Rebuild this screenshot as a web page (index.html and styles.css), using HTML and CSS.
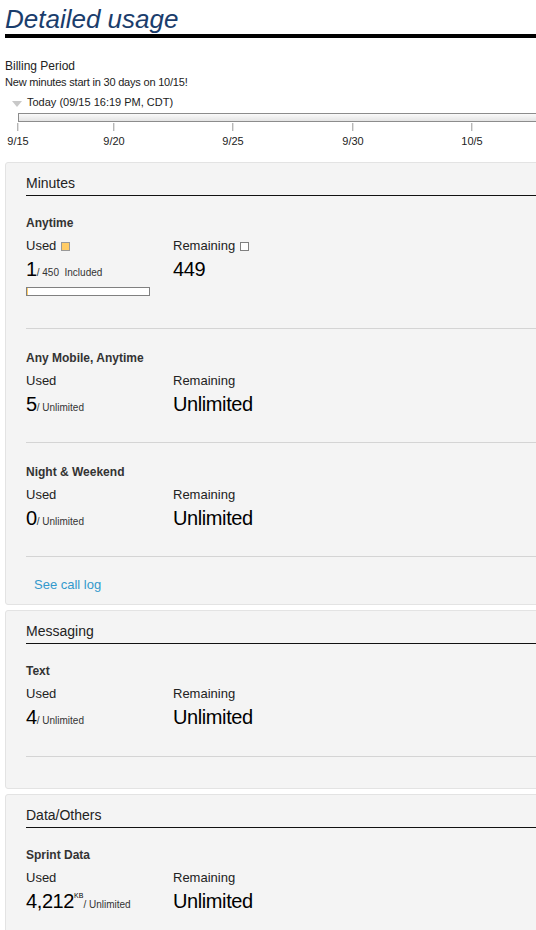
FILE: index.html
```html
<!DOCTYPE html>
<html>
<head>
    <title>Detailed usage</title>
    <link rel="stylesheet" href="styles.css">
</head>
<body>
    <div class="page">
        <h1 class="page-title">Detailed usage</h1>

        <div class="billing">
            <div class="billing-title">Billing Period</div>
            <div class="billing-note">New minutes start in 30 days on 10/15!</div>
            <div class="today"><span class="today-arrow"></span>Today (09/15 16:19 PM, CDT)</div>

            <!-- billing cycle timeline, ticks every 5 days -->
            <div class="timeline">
                <div class="timeline-bar"></div>
                <div class="axis">
                    <div class="tick" style="left: 0px">9/15</div>
                    <div class="tick" style="left: 96px">9/20</div>
                    <div class="tick" style="left: 215px">9/25</div>
                    <div class="tick" style="left: 335px">9/30</div>
                    <div class="tick" style="left: 454px">10/5</div>
                </div>
            </div>
        </div>

        <section class="panel">
            <h2 class="panel-title">Minutes</h2>

            <div class="usage">
                <h3 class="usage-name">Anytime</h3>
                <div class="usage-cols">
                    <div class="usage-col">
                        <div class="usage-label">Used <span class="swatch swatch-used"></span></div>
                        <div class="usage-value"><span class="big">1</span><span class="small">/ 450&nbsp; Included</span></div>
                        <div class="meter"><div class="meter-fill" style="width: 0.22%"></div></div>
                    </div>
                    <div class="usage-col">
                        <div class="usage-label">Remaining <span class="swatch"></span></div>
                        <div class="usage-value"><span class="big">449</span></div>
                    </div>
                </div>
            </div>

            <div class="usage">
                <h3 class="usage-name">Any Mobile, Anytime</h3>
                <div class="usage-cols">
                    <div class="usage-col">
                        <div class="usage-label">Used</div>
                        <div class="usage-value"><span class="big">5</span><span class="small">/ Unlimited</span></div>
                    </div>
                    <div class="usage-col">
                        <div class="usage-label">Remaining</div>
                        <div class="usage-value"><span class="big">Unlimited</span></div>
                    </div>
                </div>
            </div>

            <div class="usage">
                <h3 class="usage-name">Night &amp; Weekend</h3>
                <div class="usage-cols">
                    <div class="usage-col">
                        <div class="usage-label">Used</div>
                        <div class="usage-value"><span class="big">0</span><span class="small">/ Unlimited</span></div>
                    </div>
                    <div class="usage-col">
                        <div class="usage-label">Remaining</div>
                        <div class="usage-value"><span class="big">Unlimited</span></div>
                    </div>
                </div>
            </div>

            <div class="panel-foot"><a href="#" class="link">See call log</a></div>
        </section>

        <section class="panel">
            <h2 class="panel-title">Messaging</h2>

            <div class="usage">
                <h3 class="usage-name">Text</h3>
                <div class="usage-cols">
                    <div class="usage-col">
                        <div class="usage-label">Used</div>
                        <div class="usage-value"><span class="big">4</span><span class="small">/ Unlimited</span></div>
                    </div>
                    <div class="usage-col">
                        <div class="usage-label">Remaining</div>
                        <div class="usage-value"><span class="big">Unlimited</span></div>
                    </div>
                </div>
            </div>

            <div class="panel-foot"></div>
        </section>

        <section class="panel">
            <h2 class="panel-title">Data/Others</h2>

            <div class="usage">
                <h3 class="usage-name">Sprint Data</h3>
                <div class="usage-cols">
                    <div class="usage-col">
                        <div class="usage-label">Used</div>
                        <div class="usage-value"><span class="big">4,212</span><sup class="unit">KB</sup><span class="small">/ Unlimited</span></div>
                    </div>
                    <div class="usage-col">
                        <div class="usage-label">Remaining</div>
                        <div class="usage-value"><span class="big">Unlimited</span></div>
                    </div>
                </div>
            </div>
        </section>
    </div>
</body>
</html>
```

FILE: styles.css
```css
html, body {
    overflow: hidden;
}

body {
    font-family: 'Liberation Sans', Arial, sans-serif;
    margin: 0;
    padding: 0;
    background-color: #fff;
    color: #222;
}

.page {
    width: 600px;
    padding-left: 5px;
}

.page-title {
    margin: 0;
    padding-top: 4px;
    font-size: 26px;
    line-height: 30px;
    font-style: italic;
    font-weight: normal;
    color: #1a3d6c;
    border-bottom: 4px solid #000;
}

/* billing period + timeline */
.billing {
    margin-top: 20px;
    color: #222;
}

.billing-title {
    font-size: 12px;
    line-height: 16px;
}

.billing-note {
    font-size: 11px;
    line-height: 16px;
    letter-spacing: -0.2px;
}

.today {
    margin-top: 4px;
    font-size: 11px;
    line-height: 16px;
    display: flex;
    align-items: center;
}

.today-arrow {
    width: 0;
    height: 0;
    margin: 3px 5px 0 7px;
    border-left: 5px solid transparent;
    border-right: 5px solid transparent;
    border-top: 6px solid #c8c8c8;
}

.timeline {
    margin: 3px 0 0 13px;
}

.timeline-bar {
    height: 7px;
    border: 1px solid #8c8c8c;
    border-right: none;
    background: linear-gradient(#fafafa, #e4e4e4);
}

.axis {
    position: relative;
    height: 26px;
    margin-top: 1px;
}

.tick {
    position: absolute;
    top: 0;
    transform: translateX(-50%);
    display: flex;
    flex-direction: column;
    align-items: center;
    font-size: 11px;
    line-height: 16px;
    color: #222;
}

.tick::before {
    content: '';
    width: 1px;
    height: 8px;
    margin-bottom: 2px;
    background-color: #999;
}

/* usage panels */
.panel {
    margin-top: 13px;
    padding: 0 0 11px 20px;
    background-color: #f4f4f4;
    border: 1px solid #e3e3e3;
    border-radius: 3px;
}

.panel + .panel {
    margin-top: 5px;
}

.panel-title {
    margin: 0;
    padding: 12px 0 4px;
    font-size: 14px;
    line-height: 16px;
    font-weight: normal;
    color: #222;
    border-bottom: 1px solid #111;
}

.usage {
    padding: 21px 0 26px;
    border-bottom: 1px solid #d4d4d4;
}

.panel-title + .usage {
    padding-top: 19px;
    padding-bottom: 27px;
}

.panel:last-child .usage {
    border-bottom: none;
}

.usage-name {
    margin: 0;
    font-size: 12px;
    line-height: 16px;
    font-weight: bold;
    color: #333;
}

.usage-cols {
    display: flex;
    margin-top: 7px;
}

.usage-col:first-child {
    width: 147px;
}

.usage-label {
    font-size: 13px;
    line-height: 16px;
    height: 16px;
    color: #222;
}

.swatch {
    display: inline-block;
    width: 7px;
    height: 7px;
    margin-left: 1px;
    border: 1px solid #808080;
    background-color: #fff;
    vertical-align: -1px;
}

.swatch-used {
    background-color: #ffcc66;
    border-color: #999;
}

.usage-value {
    margin-top: 3px;
    line-height: 24px;
    height: 24px;
    color: #000;
    white-space: nowrap;
}

.big {
    font-size: 20px;
    letter-spacing: -0.4px;
}

.small {
    font-size: 10px;
    color: #333;
}

.unit {
    font-size: 7px;
    line-height: 0;
    vertical-align: 10px;
}

.meter {
    width: 122px;
    height: 7px;
    margin-top: 6px;
    border: 1px solid #808080;
    background-color: #fff;
}

.meter-fill {
    height: 100%;
    min-width: 1px;
    background-color: #ffcc66;
}

.usage-cols:has(.meter) {
    padding-bottom: 5px;
}

.panel-foot {
    padding: 20px 0 0 8px;
    font-size: 13px;
    line-height: 16px;
}

.link {
    color: #3399cc;
    text-decoration: none;
}
```
